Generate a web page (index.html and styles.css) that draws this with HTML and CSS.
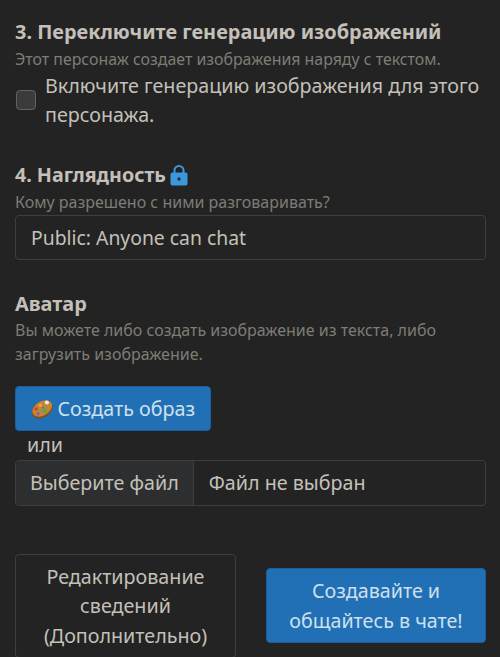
FILE: index.html
```html
<!DOCTYPE html>
<html>
<head>
    <meta charset="utf-8">
    <title>Создание персонажа</title>
    <link rel="stylesheet" href="styles.css">
</head>
<body>
    <div class="container">
        <div class="section section-image">
            <h3>3. Переключите генерацию изображений</h3>
            <p class="hint">Этот персонаж создает изображения наряду с текстом.</p>
            <label class="check-row">
                <input type="checkbox" class="check">
                <span>Включите генерацию изображения для этого персонажа.</span>
            </label>
        </div>

        <div class="section section-visibility">
            <h3 class="title-lock">4. Наглядность
                <svg class="lock" viewBox="0 0 18 22" width="18" height="22">
                    <path d="M4.5 10V6.5a4.5 4.5 0 0 1 9 0V10" fill="none" stroke="#3d97dc" stroke-width="2"/>
                    <rect x="0.5" y="8.5" width="17" height="13" rx="2" fill="#3d97dc"/>
                    <circle cx="9" cy="15" r="1.7" fill="#20303c"/>
                </svg>
            </h3>
            <p class="hint">Кому разрешено с ними разговаривать?</p>
            <div class="select">Public: Anyone can chat</div>
        </div>

        <div class="section section-avatar">
            <h3>Аватар</h3>
            <p class="hint hint-wrap">Вы можете либо создать изображение из текста, либо загрузить изображение.</p>
            <button class="btn btn-primary btn-avatar">
                <svg class="palette" viewBox="0 0 24 22" width="24" height="22">
                    <ellipse cx="12" cy="11.5" rx="12" ry="8.5" transform="rotate(-32 12 11.5)" fill="#7f4a1e"/>
                    <ellipse cx="12" cy="10.5" rx="11.5" ry="7.5" transform="rotate(-32 12 10.5)" fill="#c8852f"/>
                    <circle cx="10" cy="7" r="1.9" fill="#e8a53a"/>
                    <circle cx="17" cy="4" r="2.2" fill="#f0efe6"/>
                    <circle cx="5.5" cy="11" r="1.9" fill="#d8402f"/>
                    <circle cx="7.5" cy="16" r="1.9" fill="#8a5ac0"/>
                    <circle cx="14.5" cy="13" r="2.4" fill="#46b04a"/>
                    <circle cx="13" cy="9.5" r="1.3" fill="#3c7fd0"/>
                </svg>
                Создать образ
            </button>
            <div class="or">или</div>
            <div class="file-input">
                <span class="file-btn">Выберите файл</span>
                <span class="file-name">Файл не выбран</span>
            </div>
        </div>

        <div class="actions">
            <button class="btn btn-outline">Редактирование сведений (Дополнительно)</button>
            <button class="btn btn-primary btn-submit">Создавайте и общайтесь в чате!</button>
        </div>
    </div>
</body>
</html>
```

FILE: styles.css
```css
html, body {
    height: 100%;
}

body {
    margin: 0;
    background: #232323;
    color: #c4c0b9;
    font-family: "Noto Sans", sans-serif;
    font-size: 19.7px;
    line-height: 29.4px;
    overflow: hidden;
}

.container {
    padding: 17px 14px 0 15px;
}

h3 {
    margin: 0;
    font-size: 19.9px;
    line-height: 29.5px;
    font-weight: 700;
    color: #c4c0b9;
}

.hint {
    margin: 0;
    font-size: 16px;
    line-height: 24px;
    color: #7f7c76;
}

.section-image .hint {
    font-size: 15.9px;
}

.check-row {
    display: flex;
    align-items: center;
    gap: 9px;
}

.check {
    appearance: none;
    flex: none;
    width: 20px;
    height: 20px;
    margin: 0 0 0 1px;
    background: #3a3b3c;
    border: 1px solid #66635f;
    border-radius: 4px;
}

.section-visibility {
    margin-top: 31px;
}

.title-lock {
    display: flex;
    align-items: center;
    gap: 4px;
    font-size: 19.65px;
}

.select {
    height: 45px;
    box-sizing: border-box;
    margin-top: 1px;
    padding: 7px 15px;
    border: 1px solid #3c3e40;
    border-radius: 4px;
    background: #232323;
    font-size: 19.35px;
}

.section-avatar {
    margin-top: 29px;
}

.hint-wrap {
    margin-bottom: 20px;
}

.btn {
    font-family: inherit;
    font-size: 19.7px;
    line-height: 29.4px;
    border-radius: 4px;
    padding: 7px 15px;
}

.btn-primary {
    background: #2170b5;
    border: 1px solid #1b5f9b;
    color: #cfe0ec;
}

.btn-avatar {
    display: flex;
    align-items: center;
    gap: 4px;
    width: 196px;
    height: 45px;
    white-space: nowrap;
}

.or {
    padding-left: 12px;
    line-height: 28.4px;
}

.file-input {
    display: flex;
    height: 46px;
    box-sizing: border-box;
    border: 1px solid #3c3e40;
    border-radius: 4px;
    overflow: hidden;
}

.file-btn {
    padding: 7px 14px;
    background: #2d2e2f;
    border-right: 1px solid #3c3e40;
}

.file-name {
    padding: 7px 15px;
}

.actions {
    display: flex;
    justify-content: space-between;
    align-items: center;
    margin-top: 48px;
}

.btn-outline {
    width: 221px;
    background: transparent;
    border: 1px solid #3c3e40;
    color: #c4c0b9;
}

.btn-submit {
    width: 220px;
}
```
